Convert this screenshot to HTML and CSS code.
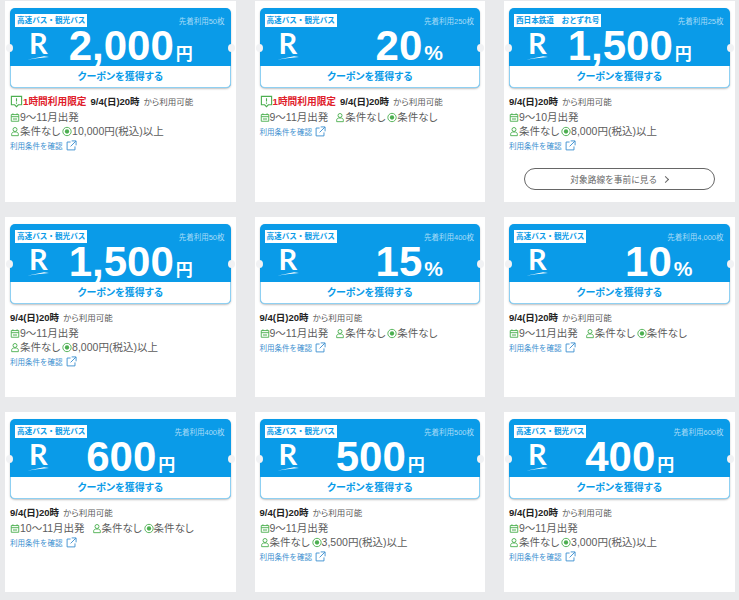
FILE: index.html
```html
<!DOCTYPE html>
<html lang="ja">
<head>
    <meta charset="UTF-8">
    <title>クーポン一覧</title>
    <link rel="stylesheet" href="styles.css">
</head>
<body>

<svg class="icon-defs" width="0" height="0">
    <symbol id="i-alert" viewBox="0 0 14 14"><path d="M1.5 1.5h11v9h-3.5l-2 2-2-2h-3.5z" fill="none" stroke="#4caf50" stroke-width="1.2"/><path d="M7 3.5v3.6M7 8.2v1.1" stroke="#4caf50" stroke-width="1.2"/></symbol>
    <symbol id="i-cal" viewBox="0 0 12 12"><path d="M1.5 2.5h9v8h-9zM1.5 5h9M3.5 1v2M8.5 1v2" fill="none" stroke="#4caf50" stroke-width="1.1"/><path d="M3.5 6.5h5v2.5h-5z" fill="#a5d6a7"/></symbol>
    <symbol id="i-user" viewBox="0 0 12 12"><circle cx="6" cy="3.6" r="2.4" fill="none" stroke="#4caf50" stroke-width="1.1"/><path d="M2 11V9.2C2 7.6 3.2 6.8 4.4 6.6h3.2C8.8 6.8 10 7.6 10 9.2V11z" fill="none" stroke="#4caf50" stroke-width="1.1"/></symbol>
    <symbol id="i-coin" viewBox="0 0 12 12"><circle cx="6" cy="6" r="5" fill="none" stroke="#4caf50" stroke-width="1.1"/><circle cx="6" cy="6" r="2.6" fill="#4caf50"/></symbol>
    <symbol id="i-ext" viewBox="0 0 12 12"><path d="M5 2.2H1.2v8.6h8.6V7M6.2 1h4.8v4.8M10.8 1.2L5 7" fill="none" stroke="#3c8fd0" stroke-width="1"/></symbol>
    <symbol id="i-swoosh" viewBox="0 0 22 4"><path d="M0 3.8L17 .2 22 1 10 2.2 5 3z" fill="#fff"/></symbol>
</svg>

<div class="coupon-grid">

    <!-- 1段目 -->
    <div class="card">
        <div class="ticket">
            <div class="ticket-head"><span class="tag">高速バス・観光バス</span><span class="count">先着利用50枚</span></div>
            <div class="ticket-main">
                <div class="logo"><span>R</span><svg><use href="#i-swoosh"/></svg></div>
                <div class="amount"><b>2,000</b><small>円</small></div>
            </div>
            <div class="get-btn">クーポンを獲得する</div>
        </div>
        <div class="when"><svg class="ic-alert"><use href="#i-alert"/></svg><em>1時間利用限定</em><b>9/4(日)20時</b><span>から利用可能</span></div>
        <div class="cond"><svg class="ic"><use href="#i-cal"/></svg>9～11月出発</div>
        <div class="cond"><svg class="ic"><use href="#i-user"/></svg>条件なし <svg class="ic"><use href="#i-coin"/></svg>10,000円(税込)以上</div>
        <a class="terms">利用条件を確認<svg><use href="#i-ext"/></svg></a>
    </div>

    <div class="card">
        <div class="ticket">
            <div class="ticket-head"><span class="tag">高速バス・観光バス</span><span class="count">先着利用250枚</span></div>
            <div class="ticket-main">
                <div class="logo"><span>R</span><svg><use href="#i-swoosh"/></svg></div>
                <div class="amount amount-pct"><b>20</b><small>%</small></div>
            </div>
            <div class="get-btn">クーポンを獲得する</div>
        </div>
        <div class="when"><svg class="ic-alert"><use href="#i-alert"/></svg><em>1時間利用限定</em><b>9/4(日)20時</b><span>から利用可能</span></div>
        <div class="cond"><svg class="ic"><use href="#i-cal"/></svg>9～11月出発 <svg class="ic ic-gap"><use href="#i-user"/></svg>条件なし <svg class="ic"><use href="#i-coin"/></svg>条件なし</div>
        <a class="terms">利用条件を確認<svg><use href="#i-ext"/></svg></a>
    </div>

    <div class="card">
        <div class="ticket">
            <div class="ticket-head"><span class="tag">西日本鉄道　おとずれ号</span><span class="count">先着利用25枚</span></div>
            <div class="ticket-main">
                <div class="logo"><span>R</span><svg><use href="#i-swoosh"/></svg></div>
                <div class="amount"><b>1,500</b><small>円</small></div>
            </div>
            <div class="get-btn">クーポンを獲得する</div>
        </div>
        <div class="when"><b>9/4(日)20時</b><span>から利用可能</span></div>
        <div class="cond"><svg class="ic"><use href="#i-cal"/></svg>9～10月出発</div>
        <div class="cond"><svg class="ic"><use href="#i-user"/></svg>条件なし <svg class="ic"><use href="#i-coin"/></svg>8,000円(税込)以上</div>
        <a class="terms">利用条件を確認<svg><use href="#i-ext"/></svg></a>
        <div class="route-btn">対象路線を事前に見る<i></i></div>
    </div>

    <!-- 2段目 -->
    <div class="card">
        <div class="ticket">
            <div class="ticket-head"><span class="tag">高速バス・観光バス</span><span class="count">先着利用50枚</span></div>
            <div class="ticket-main">
                <div class="logo"><span>R</span><svg><use href="#i-swoosh"/></svg></div>
                <div class="amount"><b>1,500</b><small>円</small></div>
            </div>
            <div class="get-btn">クーポンを獲得する</div>
        </div>
        <div class="when"><b>9/4(日)20時</b><span>から利用可能</span></div>
        <div class="cond"><svg class="ic"><use href="#i-cal"/></svg>9～11月出発</div>
        <div class="cond"><svg class="ic"><use href="#i-user"/></svg>条件なし <svg class="ic"><use href="#i-coin"/></svg>8,000円(税込)以上</div>
        <a class="terms">利用条件を確認<svg><use href="#i-ext"/></svg></a>
    </div>

    <div class="card">
        <div class="ticket">
            <div class="ticket-head"><span class="tag">高速バス・観光バス</span><span class="count">先着利用400枚</span></div>
            <div class="ticket-main">
                <div class="logo"><span>R</span><svg><use href="#i-swoosh"/></svg></div>
                <div class="amount amount-pct"><b>15</b><small>%</small></div>
            </div>
            <div class="get-btn">クーポンを獲得する</div>
        </div>
        <div class="when"><b>9/4(日)20時</b><span>から利用可能</span></div>
        <div class="cond"><svg class="ic"><use href="#i-cal"/></svg>9～11月出発 <svg class="ic ic-gap"><use href="#i-user"/></svg>条件なし <svg class="ic"><use href="#i-coin"/></svg>条件なし</div>
        <a class="terms">利用条件を確認<svg><use href="#i-ext"/></svg></a>
    </div>

    <div class="card">
        <div class="ticket">
            <div class="ticket-head"><span class="tag">高速バス・観光バス</span><span class="count">先着利用4,000枚</span></div>
            <div class="ticket-main">
                <div class="logo"><span>R</span><svg><use href="#i-swoosh"/></svg></div>
                <div class="amount amount-pct"><b>10</b><small>%</small></div>
            </div>
            <div class="get-btn">クーポンを獲得する</div>
        </div>
        <div class="when"><b>9/4(日)20時</b><span>から利用可能</span></div>
        <div class="cond"><svg class="ic"><use href="#i-cal"/></svg>9～11月出発 <svg class="ic ic-gap"><use href="#i-user"/></svg>条件なし <svg class="ic"><use href="#i-coin"/></svg>条件なし</div>
        <a class="terms">利用条件を確認<svg><use href="#i-ext"/></svg></a>
    </div>

    <!-- 3段目 -->
    <div class="card">
        <div class="ticket">
            <div class="ticket-head"><span class="tag">高速バス・観光バス</span><span class="count">先着利用400枚</span></div>
            <div class="ticket-main">
                <div class="logo"><span>R</span><svg><use href="#i-swoosh"/></svg></div>
                <div class="amount"><b>600</b><small>円</small></div>
            </div>
            <div class="get-btn">クーポンを獲得する</div>
        </div>
        <div class="when"><b>9/4(日)20時</b><span>から利用可能</span></div>
        <div class="cond"><svg class="ic"><use href="#i-cal"/></svg>10～11月出発 <svg class="ic ic-gap"><use href="#i-user"/></svg>条件なし <svg class="ic"><use href="#i-coin"/></svg>条件なし</div>
        <a class="terms">利用条件を確認<svg><use href="#i-ext"/></svg></a>
    </div>

    <div class="card">
        <div class="ticket">
            <div class="ticket-head"><span class="tag">高速バス・観光バス</span><span class="count">先着利用500枚</span></div>
            <div class="ticket-main">
                <div class="logo"><span>R</span><svg><use href="#i-swoosh"/></svg></div>
                <div class="amount"><b>500</b><small>円</small></div>
            </div>
            <div class="get-btn">クーポンを獲得する</div>
        </div>
        <div class="when"><b>9/4(日)20時</b><span>から利用可能</span></div>
        <div class="cond"><svg class="ic"><use href="#i-cal"/></svg>9～11月出発</div>
        <div class="cond"><svg class="ic"><use href="#i-user"/></svg>条件なし <svg class="ic"><use href="#i-coin"/></svg>3,500円(税込)以上</div>
        <a class="terms">利用条件を確認<svg><use href="#i-ext"/></svg></a>
    </div>

    <div class="card">
        <div class="ticket">
            <div class="ticket-head"><span class="tag">高速バス・観光バス</span><span class="count">先着利用600枚</span></div>
            <div class="ticket-main">
                <div class="logo"><span>R</span><svg><use href="#i-swoosh"/></svg></div>
                <div class="amount"><b>400</b><small>円</small></div>
            </div>
            <div class="get-btn">クーポンを獲得する</div>
        </div>
        <div class="when"><b>9/4(日)20時</b><span>から利用可能</span></div>
        <div class="cond"><svg class="ic"><use href="#i-cal"/></svg>9～11月出発</div>
        <div class="cond"><svg class="ic"><use href="#i-user"/></svg>条件なし <svg class="ic"><use href="#i-coin"/></svg>3,000円(税込)以上</div>
        <a class="terms">利用条件を確認<svg><use href="#i-ext"/></svg></a>
    </div>

</div>

</body>
</html>
```

FILE: styles.css
```css
* {
    box-sizing: border-box;
}

html, body {
    margin: 0;
    height: 600px;
    overflow: hidden;
}

body {
    background-color: #e9eaec;
    font-family: "Liberation Sans", "Noto Sans CJK JP", sans-serif;
    font-feature-settings: "palt";
    color: #5c5c5c;
}

.icon-defs {
    display: block;
    height: 0;
}

.coupon-grid {
    display: grid;
    grid-template-columns: repeat(3, 230.5px);
    grid-template-rows: 201px 180px 180px;
    column-gap: 19px;
    row-gap: 15px;
    padding: 1px 0 0 5px;
}

.card {
    background: #fff;
    padding: 7px 5px 0;
}

/* チケット部分 */
.ticket {
    position: relative;
    height: 80px;
    background: #0a9be8;
    border-radius: 5px;
    box-shadow: 0 1px 2px rgba(0, 0, 0, 0.25);
    display: flex;
    flex-direction: column;
}

.ticket::before,
.ticket::after {
    content: "";
    position: absolute;
    top: 36px;
    width: 7px;
    height: 8px;
    border-radius: 50%;
    background: #f1f2f4;
}

.ticket::before {
    left: -4px;
}

.ticket::after {
    right: -4px;
}

.ticket-head {
    display: flex;
    justify-content: space-between;
    align-items: center;
    height: 14px;
    margin-top: 5px;
    padding: 0 6px 0 5px;
}

.tag {
    background: #fff;
    color: #0a9be8;
    font-size: 7.6px;
    font-feature-settings: normal;
    font-weight: 700;
    line-height: 13px;
    padding: 0 2px;
    white-space: nowrap;
}

.count {
    color: #a9dcf7;
    font-size: 7.5px;
    font-feature-settings: normal;
    white-space: nowrap;
}

.ticket-main {
    display: flex;
    align-items: flex-start;
    height: 39px;
    color: #fff;
}

.logo {
    width: 30px;
    margin-left: 17px;
    display: flex;
    flex-direction: column;
    align-items: flex-start;
}

.logo span {
    font-family: "Lato", sans-serif;
    font-size: 29px;
    font-weight: 700;
    line-height: 26px;
    margin: 3px 0 0 2px;
}

.logo svg {
    width: 22px;
    height: 4px;
}

.amount {
    flex: 1;
    display: flex;
    justify-content: center;
    align-items: baseline;
    padding-right: 26px;
    white-space: nowrap;
}

.amount b {
    font-size: 42px;
    line-height: 37px;
}

.amount small {
    font-size: 17px;
    font-weight: 700;
    margin-left: 2px;
}

.amount-pct {
    justify-content: flex-end;
    padding-right: 37px;
}

.amount-pct small {
    font-size: 21px;
}

.get-btn {
    height: 22px;
    margin-top: auto;
    background: #fff;
    border: 1px solid #8fd0f2;
    border-top: none;
    border-radius: 0 0 5px 5px;
    color: #0a9be8;
    font-size: 10px;
    font-weight: 700;
    line-height: 21px;
    text-align: center;
}

/* 条件テキスト */
.when {
    display: flex;
    align-items: center;
    height: 14px;
    margin: 6px 0 2px;
    font-size: 8.5px;
    white-space: nowrap;
}

.when em {
    color: #e0202a;
    font-size: 9.7px;
    font-style: normal;
    font-weight: 700;
    margin-right: 4px;
}

.when b {
    color: #222;
    font-size: 9.5px;
    margin-right: 4px;
}

.ic-alert {
    width: 13px;
    height: 13px;
}

.cond {
    margin: 1px 0 -1px;
    height: 14px;
    font-size: 10.5px;
    line-height: 14px;
    word-spacing: -1px;
    white-space: nowrap;
}

.ic {
    width: 10px;
    height: 11px;
    vertical-align: -1.5px;
}

.ic-gap {
    margin-left: 5px;
}

.terms {
    display: flex;
    align-items: center;
    height: 13px;
    margin-top: 1.5px;
    color: #3c8fd0;
    font-size: 7.5px;
    font-feature-settings: normal;
}

.terms svg {
    width: 11px;
    height: 11px;
    margin-left: 3px;
}

.route-btn {
    display: flex;
    align-items: center;
    justify-content: center;
    height: 22px;
    margin: 16.5px 15px 0;
    border: 1px solid #666;
    border-radius: 11px;
    color: #666;
    font-size: 8.7px;
    font-feature-settings: normal;
}

.route-btn i {
    width: 5px;
    height: 5px;
    margin-left: 6px;
    border-top: 1px solid #666;
    border-right: 1px solid #666;
    transform: rotate(45deg);
}
```
